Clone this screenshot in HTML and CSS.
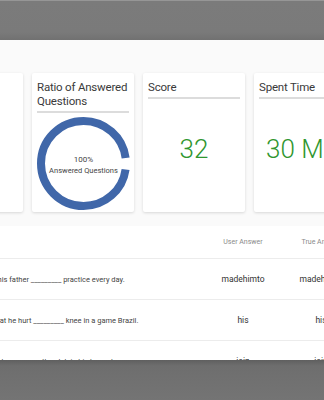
FILE: index.html
```html
<!DOCTYPE html>
<html lang="en">
<head>
  <meta charset="UTF-8">
  <title>Quiz Result</title>
  <link rel="stylesheet" href="styles.css">
</head>
<body>

  <div class="topbar"></div>

  <main class="page">
    <section class="cards">
      <div class="card"></div>

      <div class="card">
        <h3 class="card-title">Ratio of Answered<br>Questions</h3>
        <div class="ratio">
          <svg class="ring" width="93" height="93" viewBox="0 0 93 93">
            <circle cx="46.5" cy="46.5" r="42.5" fill="none" stroke="#4067a9" stroke-width="8"
                    stroke-dasharray="255 12" stroke-dashoffset="-6"/>
          </svg>
          <div class="ratio-label">
            <span class="ratio-value">100%</span>
            <span class="ratio-text">Answered Questions</span>
          </div>
        </div>
      </div>

      <div class="card">
        <h3 class="card-title">Score</h3>
        <div class="big-number">32</div>
      </div>

      <div class="card">
        <h3 class="card-title">Spent Time</h3>
        <div class="big-number">30 Min</div>
      </div>
    </section>

    <section class="answers">
      <div class="row head">
        <div class="cell question">Question</div>
        <div class="cell">User Answer</div>
        <div class="cell">True Answer</div>
      </div>
      <div class="row">
        <div class="cell question">At first, his father _________ practice every day.</div>
        <div class="cell answer">madehimto</div>
        <div class="cell answer">madehimto</div>
      </div>
      <div class="row">
        <div class="cell question">Sadly, that he hurt _________ knee in a game Brazil.</div>
        <div class="cell answer">his</div>
        <div class="cell answer">his</div>
      </div>
      <div class="row">
        <div class="cell question">He went to _________ the club in his home town.</div>
        <div class="cell answer">join</div>
        <div class="cell answer">join</div>
      </div>
    </section>
  </main>

  <div class="bottombar"></div>

</body>
</html>
```

FILE: styles.css
```css
html, body {
  margin: 0;
  width: 324px;
  height: 400px;
  overflow: hidden;
}
body {
  font-family: 'Roboto', 'Liberation Sans', sans-serif;
  color: #333;
  background: #f5f5f5;
}
.topbar {
  height: 40px;
  box-sizing: border-box;
  border-top: 1px solid #969696;
  background: linear-gradient(#7b7b7b, #7a7a7a 80%, #717171);
}
.page {
  height: 320px;
  overflow: hidden;
  background: linear-gradient(#fafafa 0, #fafafa 186px, #f4f4f4 186px);
  padding-top: 33px;
  box-sizing: border-box;
}
.cards {
  display: flex;
  gap: 9px;
  margin-left: -79px;
}
.card {
  flex: 0 0 102px;
  min-width: 0;
  height: 139px;
  box-sizing: border-box;
  padding: 7px 5px 0;
  background: #fff;
  border-radius: 2px;
  box-shadow: 0 1px 3px rgba(0, 0, 0, 0.14);
  display: flex;
  flex-direction: column;
}
.card-title {
  margin: 0;
  padding-bottom: 3px;
  border-bottom: 2px solid #dcdcdc;
  font-size: 11.5px;
  font-weight: 400;
  line-height: 14px;
  letter-spacing: -0.2px;
  color: #3a3a3a;
  white-space: nowrap;
}
.ratio {
  position: relative;
  margin-top: 4px;
  width: 93px;
  height: 93px;
}
.ring {
  display: block;
}
.ratio-label {
  position: absolute;
  inset: 0;
  display: flex;
  flex-direction: column;
  align-items: center;
  justify-content: center;
  color: #444;
  line-height: 11px;
  padding-top: 2px;
}
.ratio-value {
  font-size: 8px;
}
.ratio-text {
  font-size: 7.5px;
}
.big-number {
  flex: 1;
  display: flex;
  justify-content: center;
  align-items: center;
  padding-bottom: 14px;
  font-size: 26px;
  font-weight: 300;
  color: #2f962f;
  white-space: nowrap;
}
.answers {
  margin-top: 14px;
  margin-left: -28px;
  width: 388px;
  background: #fff;
}
.row {
  display: grid;
  grid-template-columns: 232px 78px 78px;
  height: 41px;
  align-items: center;
  border-bottom: 1px solid #ececec;
  box-sizing: border-box;
}
.row.head {
  height: 33px;
  font-size: 7px;
  color: #8a8a8a;
}
.cell {
  text-align: center;
  white-space: nowrap;
}
.cell.question {
  text-align: left;
  font-size: 7.5px;
  color: #444;
  overflow: hidden;
}
.head .cell.question {
  color: #8a8a8a;
  font-size: 7px;
}
.answer {
  font-size: 8.5px;
  color: #333;
}
.bottombar {
  height: 40px;
  background: linear-gradient(#5f5f5f, #6e6e6e 6px, #747474);
}
```
